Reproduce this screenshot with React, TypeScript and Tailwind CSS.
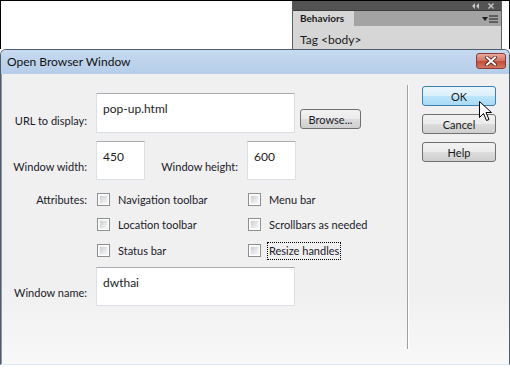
import React from "react";

const font = { fontFamily: 'Lato, "Noto Sans", sans-serif' };

function Checkbox() {
    return (
        <div className="w-[13px] h-[13px] shrink-0 border border-[#8e8f8f] bg-white p-[1px]">
            <div className="w-full h-full bg-[linear-gradient(135deg,#cbcfd5,#f6f6f6)] border border-[#f4f4f4]" />
        </div>
    )
}

function TextBox({ value, className }: { value?: string; className: string }) {
    return (
        <div className={"bg-white border border-[#dbdfe6] border-t-[#abadb3] pl-[6px] pt-[7px] text-[12px] text-[#1c1c1c] leading-[16px] " + className}>
            {value}
        </div>
    )
}

function Button({ label, hot }: { label: string; hot?: boolean }) {
    return (
        <div className={
            "w-[74px] h-[20px] rounded-[3px] border flex items-center justify-center leading-none text-[#1a1a1a] " +
            (hot
                ? "border-[#3c7fb1] bg-[linear-gradient(#eaf6fd,#d9f0fc_50%,#bee6fd_50%,#a7d9f5)]"
                : "border-[#707070] bg-[linear-gradient(#f2f2f2,#ebebeb_50%,#dddddd_50%,#cfcfcf)]")
        }>
            {label}
        </div>
    )
}

export default function App() {
    return (
        <div className="w-[510px] h-[371px] bg-white relative overflow-hidden text-[11px]" style={font}>
            {/* background page with behaviors panel */}
            <div className="h-[49px] border-t border-x border-black flex justify-end pr-[7px]">
                <div className="w-[210px] h-[48px] border-x border-[#5e5e5e] flex flex-col overflow-hidden">
                    <div className="h-[11px] bg-[#535353] flex items-center justify-end gap-[9px] pr-[7px]">
                        <svg width="7" height="6" viewBox="0 0 7 6">
                            <path d="M3 0 L0 3 L3 6 Z M7 0 L4 3 L7 6 Z" fill="#c8c8c8" />
                        </svg>
                        <svg width="6" height="6" viewBox="0 0 6 6">
                            <path d="M0.5 0.5 L5.5 5.5 M5.5 0.5 L0.5 5.5" stroke="#c8c8c8" strokeWidth="1.4" />
                        </svg>
                    </div>
                    <div className="h-[17px] bg-[#a3a3a3] border-t border-[#3c3c3c] flex">
                        <div className="w-[61px] bg-[#d6d6d6] flex items-center pl-[7px] text-[10px] font-bold text-[#1a1a1a]">Behaviors</div>
                        <div className="flex-1 flex items-center justify-end gap-[1px] pr-[3px]">
                            <svg width="6" height="4" viewBox="0 0 6 4"><path d="M0 0 L6 0 L3 4 Z" fill="#1f1f1f" /></svg>
                            <svg width="9" height="8" viewBox="0 0 9 8"><path d="M0 1 H9 M0 4 H9 M0 7 H9" stroke="#1f1f1f" strokeWidth="1" /></svg>
                        </div>
                    </div>
                    <div className="flex-1 bg-[#d6d6d6] pl-[7px] pt-[5px] text-[12px] text-[#1a1a1a]">Tag &lt;body&gt;</div>
                </div>
            </div>

            {/* dialog */}
            <div className="w-[510px] h-[316px] rounded-t-[6px] border border-[#4e5d6e] border-b-[#dcedf3] flex flex-col overflow-hidden">
                <div className="h-[24px] bg-[linear-gradient(#c6daf0,#b6cee9)] flex items-center justify-between pl-[6px] pr-[3px]">
                    <span className="text-[12px] text-[#111]">Open Browser Window</span>
                    <div className="w-[30px] h-[16px] mb-[3px] rounded-[3px] border border-[#8a3c35] bg-[linear-gradient(#e9a99f,#d3705f_50%,#c24c36_50%,#d2775f)] flex items-center justify-center">
                        <svg width="12" height="10" viewBox="0 0 12 10">
                            <path d="M2 1.5 L10 8.5 M10 1.5 L2 8.5" stroke="#4a1e18" strokeWidth="3.6" strokeLinecap="square" />
                            <path d="M2 1.5 L10 8.5 M10 1.5 L2 8.5" stroke="#ffffff" strokeWidth="2" strokeLinecap="square" />
                        </svg>
                    </div>
                </div>

                <div className="flex-1 flex bg-[linear-gradient(#f0f0f0_75%,#f8f8f8)] border-l border-[#8a96a4] text-[#1a1a2a]">
                    {/* form */}
                    <div className="w-[405px] flex flex-col">
                        <div className="flex items-end mt-[19px]">
                            <div className="w-[85px] text-right pb-[4px] leading-[16px]">URL to display:</div>
                            <TextBox value="pop-up.html" className="ml-[9px] w-[199px] h-[40px]" />
                            <div className="ml-[5px] mb-[4px] w-[61px] h-[20px] rounded-[3px] border border-[#707070] bg-[linear-gradient(#f2f2f2,#ebebeb_50%,#dddddd_50%,#cfcfcf)] flex items-center justify-center leading-none">
                                Browse...
                            </div>
                        </div>

                        <div className="flex items-end mt-[8px]">
                            <div className="w-[85px] text-right pb-[5px] leading-[16px]">Window width:</div>
                            <TextBox value="450" className="ml-[9px] w-[49px] h-[39px]" />
                            <div className="w-[93px] text-right pb-[5px] leading-[16px]">Window height:</div>
                            <TextBox value="600" className="ml-[9px] w-[49px] h-[39px]" />
                        </div>

                        <div className="flex mt-[13px]">
                            <div className="w-[85px] h-[13px] flex items-center justify-end leading-[16px]">Attributes:</div>
                            <div className="ml-[10px] w-[151px] flex flex-col gap-[12px]">
                                <div className="h-[13px] flex items-center gap-[8px] leading-[16px]"><Checkbox /><span>Navigation toolbar</span></div>
                                <div className="h-[13px] flex items-center gap-[8px] leading-[16px]"><Checkbox /><span>Location toolbar</span></div>
                                <div className="h-[13px] flex items-center gap-[8px] leading-[16px] mt-[1px]"><Checkbox /><span>Status bar</span></div>
                            </div>
                            <div className="flex flex-col gap-[12px]">
                                <div className="h-[13px] flex items-center gap-[6px] leading-[16px]"><Checkbox /><span className="px-[1px] border border-transparent">Menu bar</span></div>
                                <div className="h-[13px] flex items-center gap-[6px] leading-[16px]"><Checkbox /><span className="px-[1px] border border-transparent">Scrollbars as needed</span></div>
                                <div className="h-[13px] flex items-center gap-[6px] leading-[16px] mt-[1px]"><Checkbox /><span className="px-[1px] border border-dotted border-black">Resize handles</span></div>
                            </div>
                        </div>

                        <div className="flex items-end mt-[10px]">
                            <div className="w-[85px] text-right pb-[5px] leading-[16px]">Window name:</div>
                            <TextBox value="dwthai" className="ml-[9px] w-[199px] h-[39px]" />
                        </div>
                    </div>

                    {/* separator */}
                    <div className="w-[2px] h-[264px] mt-[11px] border-l border-[#a0a0a0] border-r border-r-white" />

                    {/* buttons */}
                    <div className="ml-[13px] mt-[12px] flex flex-col gap-[8px]">
                        <Button label="OK" hot />
                        <Button label="Cancel" />
                        <Button label="Help" />
                    </div>
                </div>
            </div>

            {/* mouse cursor */}
            <svg className="absolute left-[479px] top-[101px]" width="13" height="21" viewBox="0 0 13 21">
                <path d="M0.5 0.5 L0.5 16.5 L4.5 12.5 L7.5 19.5 L10 18.5 L7 11.5 L12.5 11.5 Z" fill="white" stroke="black" strokeWidth="1" strokeLinejoin="miter" />
            </svg>
        </div>
    )
}
